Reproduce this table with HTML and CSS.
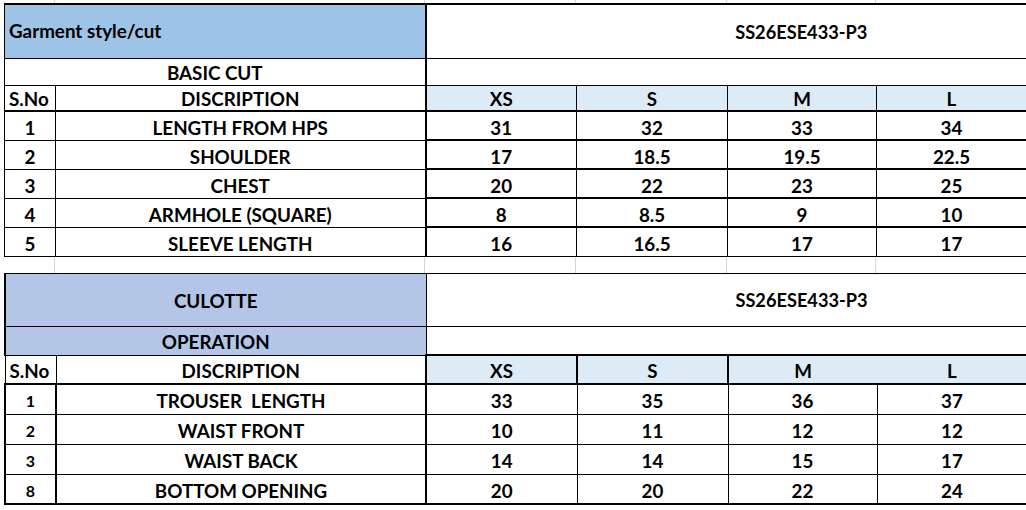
FILE: index.html
```html
<!DOCTYPE html>
<html>
<head>
<meta charset="utf-8">
<link rel="stylesheet" href="styles.css">
</head>
<body>
<div class="sheet">
  <div class="grid-strip top-strip"><span></span><span></span><span></span><span></span><span></span><span></span></div>
  <table class="spec spec1">
    <colgroup><col class="c-no"><col class="c-desc"><col class="c-xs"><col class="c-s"><col class="c-m"><col class="c-l"></colgroup>
    <tr class="r-title">
      <td colspan="2" class="title-left blue1">Garment style/cut</td>
      <td colspan="4" class="style-code">SS26ESE433-P3</td>
    </tr>
    <tr class="r-sub">
      <td colspan="2" class="sub">BASIC CUT</td>
      <td colspan="4" class="empty"></td>
    </tr>
    <tr class="r-head">
      <td class="sno">S.No</td>
      <td>DISCRIPTION</td>
      <td class="size">XS</td>
      <td class="size">S</td>
      <td class="size">M</td>
      <td class="size">L</td>
    </tr>
    <tr class="r-data first"><td>1</td><td>LENGTH FROM HPS</td><td>31</td><td>32</td><td>33</td><td>34</td></tr>
    <tr class="r-data"><td>2</td><td>SHOULDER</td><td>17</td><td>18.5</td><td>19.5</td><td>22.5</td></tr>
    <tr class="r-data"><td>3</td><td>CHEST</td><td>20</td><td>22</td><td>23</td><td>25</td></tr>
    <tr class="r-data"><td>4</td><td>ARMHOLE (SQUARE)</td><td>8</td><td>8.5</td><td>9</td><td>10</td></tr>
    <tr class="r-data last"><td>5</td><td>SLEEVE LENGTH</td><td>16</td><td>16.5</td><td>17</td><td>17</td></tr>
  </table>
  <div class="grid-strip gap-strip"><span></span><span></span><span></span><span></span><span></span><span></span></div>
  <table class="spec spec2">
    <colgroup><col class="c-no"><col class="c-desc"><col class="c-xs"><col class="c-s"><col class="c-m"><col class="c-l"></colgroup>
    <tr class="r-title">
      <td colspan="2" class="blue2 center-title">CULOTTE</td>
      <td colspan="4" class="style-code">SS26ESE433-P3</td>
    </tr>
    <tr class="r-sub2">
      <td colspan="2" class="blue2 sub">OPERATION</td>
      <td colspan="4" class="empty"></td>
    </tr>
    <tr class="r-head">
      <td class="sno">S.No</td>
      <td>DISCRIPTION</td>
      <td class="size">XS</td>
      <td class="size">S</td>
      <td class="size m-open">M</td>
      <td class="size l-open">L</td>
    </tr>
    <tr class="r-data first"><td class="num-sm">1</td><td>TROUSER&nbsp; LENGTH</td><td>33</td><td>35</td><td>36</td><td>37</td></tr>
    <tr class="r-data"><td class="num-sm">2</td><td>WAIST FRONT</td><td>10</td><td>11</td><td>12</td><td>12</td></tr>
    <tr class="r-data"><td class="num-sm">3</td><td>WAIST BACK</td><td>14</td><td>14</td><td>15</td><td>17</td></tr>
    <tr class="r-data last"><td class="num-sm">8</td><td>BOTTOM OPENING</td><td>20</td><td>20</td><td>22</td><td>24</td></tr>
  </table>
</div>
</body>
</html>
```

FILE: styles.css
```css
html, body {
  margin: 0;
  padding: 0;
  background: #ffffff;
}

.sheet {
  padding-left: 4px;
  width: 1022px;
  font-family: Lato, "Open Sans", "Liberation Sans", sans-serif;
  font-weight: 700;
  color: #000000;
}

.grid-strip {
  display: grid;
  grid-template-columns: 51px 370px 151px 151px 149px 150px;
}

.grid-strip span {
  border-right: 1px solid #d6d6d6;
}

.grid-strip span:last-child {
  border-right: none;
}

.top-strip {
  height: 3px;
}

.gap-strip {
  height: 16px;
}

.spec {
  border-collapse: collapse;
  table-layout: fixed;
  width: 1022px;
  font-size: 18.8px;
  line-height: 20px;
}

.c-no { width: 51px; }
.c-desc { width: 370px; }
.c-xs { width: 151px; }
.c-s { width: 151px; }
.c-m { width: 149px; }
.c-l { width: 150px; }

.spec td {
  border: 1px solid #000000;
  padding: 0;
  text-align: center;
  vertical-align: middle;
  white-space: nowrap;
  overflow: hidden;
}

.spec td.blue1 { background: #9dc3e6; }
.spec td.blue2 { background: #b4c6e7; }

.spec td.title-left {
  text-align: left;
  padding-left: 4px;
  padding-top: 0;
}

.spec td.style-code {
  font-size: 18.2px;
  padding-left: 150px;
  padding-top: 1px;
}

.spec td.center-title {
  padding-top: 2px;
}

.spec td.sno {
  text-align: left;
  padding-left: 4px;
}

.spec td.size {
  background: #ddebf7;
}

/* table 1 */
.spec1 .r-title { height: 54px; }
.spec1 .r-sub { height: 27px; }
.spec1 .r-head { height: 26px; }
.spec1 .r-data { height: 29px; }
.spec1 .r-data td { padding-top: 4px; }
.spec1 .r-head td { padding-top: 2px; border-bottom: 2px solid #000; }
.spec1 .r-title td { border-top-width: 2px; }
.spec1 td:nth-child(3) { border-left-width: 2px; }
.spec1 .r-title td:nth-child(2),
.spec1 .r-sub td:nth-child(2) { border-left-width: 2px; }
.spec1 .r-data:not(.last) td:nth-child(n+3) { border-bottom-width: 2px; }
.spec1 .r-sub td { padding-top: 3px; }

/* table 2 */
.spec2 .r-title { height: 53px; }
.spec2 .r-sub2 { height: 29px; }
.spec2 .r-head { height: 29px; }
.spec2 .r-data { height: 30px; }
.spec2 .r-head td { border-bottom: 2px solid #000; padding-top: 3px; }
.spec2 .r-head td.size { border-top-width: 2px; }
.spec2 .r-title td:first-child,
.spec2 .r-sub2 td:first-child,
.spec2 .r-data td:first-child { border-left-width: 2px; }
.spec2 .r-data td:first-child { border-right-width: 2px; }
.spec2 .r-data td:nth-child(2) { border-right-width: 2px; }
.spec2 .r-head td:nth-child(3),
.spec2 .r-head td:nth-child(4),
.spec2 .r-head td:nth-child(5) { border-left-width: 2px; }
.spec2 .r-data.last td { border-bottom-width: 2px; }
.spec2 .r-sub2 td { padding-top: 2px; }
.spec2 .r-data td { padding-top: 4px; }

.spec2 td.m-open { border-right: none; }
.spec2 td.l-open { border-left: none; }

.spec td.num-sm {
  font-size: 16px;
}

.spec td.empty { background: #ffffff; }
```
